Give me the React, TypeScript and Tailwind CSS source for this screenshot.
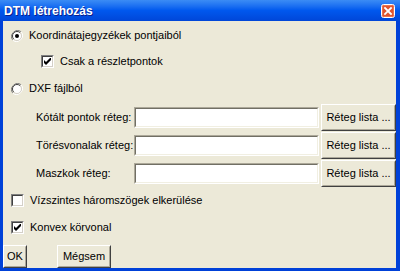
import React from "react";

const font = { fontFamily: '"Liberation Sans", Arial, sans-serif' };

function Radio({ checked }: { checked?: boolean }) {
  return (
    <svg width="12" height="12" viewBox="0 0 12 12" className="shrink-0">
      <path d="M10.2 1.8 A6 6 0 0 0 1.8 10.2" fill="none" stroke="#808080" strokeWidth="1" />
      <path d="M1.8 10.2 A6 6 0 0 0 10.2 1.8" fill="none" stroke="#ffffff" strokeWidth="1" />
      <circle cx="6" cy="6" r="4.5" fill="#ffffff" />
      <path d="M9.2 2.8 A4.5 4.5 0 0 0 2.8 9.2" fill="none" stroke="#404040" strokeWidth="1" />
      <path d="M2.8 9.2 A4.5 4.5 0 0 0 9.2 2.8" fill="none" stroke="#d4d0c8" strokeWidth="1" />
      {checked && <circle cx="6" cy="6" r="2" fill="#000000" />}
    </svg>
  );
}

function Check({ checked }: { checked?: boolean }) {
  return (
    <div className="w-[13px] h-[13px] shrink-0 border border-t-[#808080] border-l-[#808080] border-b-white border-r-white">
      <div className="w-full h-full bg-white border border-t-[#404040] border-l-[#404040] border-b-[#d4d0c8] border-r-[#d4d0c8] flex items-center justify-center">
        {checked && (
          <svg width="7" height="7" viewBox="0 0 7 7">
            <path d="M0 2v3l2 2 5-5V-1L2 4z" fill="#000" />
          </svg>
        )}
      </div>
    </div>
  );
}

function Button({ children, className }: { children: React.ReactNode; className?: string }) {
  return (
    <div
      className={`border border-t-white border-l-white border-b-[#404040] border-r-[#404040] bg-[#ece9d8] ${className ?? ""}`}
    >
      <div className="w-full h-full border border-t-[#ece9d8] border-l-[#ece9d8] border-b-[#aca899] border-r-[#aca899] flex items-center justify-center text-[11px] text-black">
        {children}
      </div>
    </div>
  );
}

function Input() {
  return (
    <div className="w-[185px] h-[21px] border border-t-[#aca899] border-l-[#aca899] border-b-white border-r-white">
      <div className="w-full h-full bg-white border border-t-[#716f64] border-l-[#716f64] border-b-[#f1efe2] border-r-[#f1efe2]" />
    </div>
  );
}

const rows = ["Kótált pontok réteg:", "Törésvonalak réteg:", "Maszkok réteg:"];

export default function App() {
  return (
    <div className="w-[400px] h-[271px] flex flex-col bg-[#0041d8]" style={font}>
      {/* title bar */}
      <div className="h-[21px] shrink-0 flex items-center justify-between pl-[4px] pr-[5px] bg-gradient-to-b from-[#3b8cf5] via-[#0058ee] to-[#0046d8]">
        <span className="text-white font-bold text-[12px] [text-shadow:1px_1px_0_#0a1e8c]">DTM létrehozás</span>
        <svg width="14" height="14" viewBox="0 0 14 14">
          <rect x="0.5" y="0.5" width="13" height="13" rx="2" fill="#e0542e" stroke="#ffffff" />
          <rect x="1.5" y="1.5" width="11" height="11" rx="1" fill="none" stroke="#f08a6a" strokeWidth="0.6" />
          <path d="M4 4l6 6M10 4l-6 6" stroke="#ffffff" strokeWidth="1.8" strokeLinecap="square" />
        </svg>
      </div>

      {/* body */}
      <div className="flex-1 ml-[3px] mr-[4px] mb-[4px] bg-[#ece9d8] text-[11px] text-black flex flex-col">
        <div className="flex items-center gap-[6px] ml-[8px] mt-[8px] h-[13px]">
          <Radio checked />
          <span>Koordinátajegyzékek pontjaiból</span>
        </div>
        <div className="flex items-center gap-[6px] ml-[38px] mt-[13px] h-[13px]">
          <Check checked />
          <span>Csak a részletpontok</span>
        </div>
        <div className="flex items-center gap-[6px] ml-[8px] mt-[14px] h-[13px]">
          <Radio />
          <span>DXF fájlból</span>
        </div>
        <div className="flex flex-col mt-[8px]">
          {rows.map((r) => (
            <div key={r} className="flex items-center h-[28px]">
              <span className="w-[98px] ml-[33px]">{r}</span>
              <Input />
              <Button className="w-[75px] h-[27px] ml-[2px]">Réteg lista ...</Button>
            </div>
          ))}
        </div>
        <div className="flex items-center gap-[6px] ml-[8px] mt-[7px] h-[13px]">
          <Check />
          <span>Vízszintes háromszögek elkerülése</span>
        </div>
        <div className="flex items-center gap-[6px] ml-[8px] mt-[14px] h-[13px]">
          <Check checked />
          <span>Konvex körvonal</span>
        </div>
        <div className="flex items-center mt-[11px]">
          <Button className="w-[24px] h-[23px] ml-[0px]">OK</Button>
          <Button className="w-[54px] h-[23px] ml-[30px]">Mégsem</Button>
        </div>
      </div>
    </div>
  );
}
